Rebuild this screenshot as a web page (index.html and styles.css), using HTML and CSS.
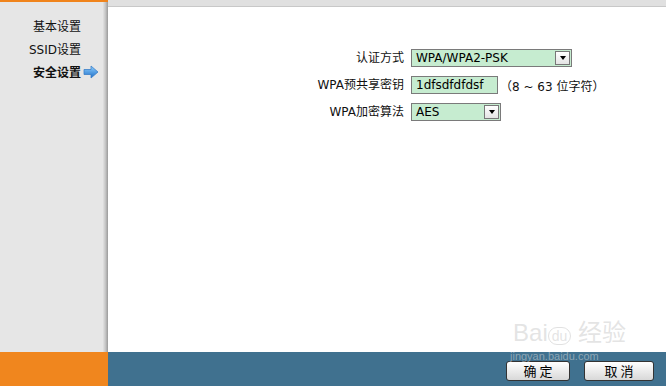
FILE: index.html
```html
<!DOCTYPE html>
<html>
<head>
<meta charset="utf-8">
<link rel="stylesheet" href="styles.css">
</head>
<body>
<div class="page">
  <div class="main">
    <div class="sidebar">
      <div class="nav-item">基本设置</div>
      <div class="nav-item">SSID设置</div>
      <div class="nav-item active">安全设置<svg class="arrow" width="16" height="14" viewBox="0 0 16 14"><defs><linearGradient id="g" x1="0" y1="0" x2="0" y2="1"><stop offset="0" stop-color="#8fd0ff"/><stop offset="1" stop-color="#1e6fc8"/></linearGradient></defs><path d="M1 4.5 H8 V1 L15 7 L8 13 V9.5 H1 Z" fill="url(#g)" stroke="#3a7fc8" stroke-width="0.8"/></svg></div>
    </div>
    <div class="edge"></div>
    <div class="content">
      <div class="form">
        <div class="label">认证方式</div>
        <div class="field"><div class="select wide"><span>WPA/WPA2-PSK</span><span class="drop"><i></i></span></div></div>
        <div class="label">WPA预共享密钥</div>
        <div class="field"><div class="input">1dfsdfdfdsf</div><span class="hint">（8 ~ 63 位字符）</span></div>
        <div class="label">WPA加密算法</div>
        <div class="field"><div class="select narrow"><span>AES</span><span class="drop"><i></i></span></div></div>
      </div>
      <div class="watermark">
        <div class="wm-logo">Bai<span class="paw">du</span> 经验</div>
      </div>
    </div>
  </div>
  <div class="footer">
    <div class="foot-left"></div>
    <div class="foot-right">
      <span class="wm-url">jingyan.baidu.com</span>
      <button class="btn">确 定</button>
      <button class="btn">取 消</button>
    </div>
  </div>
</div>
</body>
</html>
```
FILE: styles.css
```css
html, body {
  margin: 0;
  padding: 0;
}
body {
  font-family: "DejaVu Sans", "Noto Sans CJK SC", sans-serif;
  font-size: 12px;
  color: #000;
  background: #fff;
}
.page {
  width: 666px;
  height: 386px;
  display: flex;
  flex-direction: column;
  overflow: hidden;
}
.main {
  flex: 1;
  display: flex;
}
.sidebar {
  width: 103px;
  background: #e6e6e6;
  border-top: 2px solid #f0841c;
  padding-top: 17px;
  display: flex;
  flex-direction: column;
  gap: 7px;
}
.edge {
  width: 5px;
  background: linear-gradient(to right, #e2e2e2, #c4c4c4 50%, #9a9a9a);
  border-top: 2px solid #f0841c;
}
.nav-item {
  position: relative;
  text-align: right;
  padding-right: 22px;
  line-height: 16px;
  color: #111;
}
.nav-item.active {
  font-weight: bold;
}
.arrow {
  position: absolute;
  right: 4px;
  top: 0;
}
.content {
  flex: 1;
  position: relative;
  border-top: 6px solid #e0e0e0;
  box-shadow: inset 0 1px 0 #c8c8c8;
  padding-top: 43px;
}
.form {
  display: grid;
  grid-template-columns: 296px auto;
  column-gap: 7px;
  row-gap: 9px;
  align-items: center;
}
.label {
  text-align: right;
  line-height: 18px;
  color: #111;
}
.field {
  display: flex;
  align-items: center;
  gap: 2px;
}
.select, .input {
  height: 16px;
  border: 1px solid #7a7a7a;
  background: #c6ecd0;
  line-height: 16px;
  padding-left: 4px;
  box-sizing: content-box;
}
.select {
  display: flex;
  justify-content: space-between;
  align-items: center;
  padding-right: 1px;
}
.select.wide { width: 154px; }
.select.narrow { width: 83px; }
.input { width: 81px; }
.drop {
  width: 15px;
  height: 14px;
  background: linear-gradient(#ffffff, #e4e4e4);
  border: 1px solid #777;
  box-sizing: border-box;
  display: flex;
  align-items: center;
  justify-content: center;
}
.drop i {
  width: 0;
  height: 0;
  border-left: 3px solid transparent;
  border-right: 3px solid transparent;
  border-top: 4px solid #000;
}
.hint {
  color: #111;
}
.watermark {
  position: absolute;
  right: 40px;
  bottom: 4px;
  color: rgba(205, 205, 205, 0.55);
  font-family: "Liberation Sans", "Noto Sans CJK SC", sans-serif;
  font-size: 24px;
}
.paw {
  font-size: 14px;
  border: 1px solid rgba(205,205,205,0.6);
  border-radius: 10px;
  padding: 0 3px;
}
.footer {
  height: 34px;
  display: flex;
}
.foot-left {
  width: 108px;
  background: #f0861e;
}
.foot-right {
  flex: 1;
  position: relative;
  background: #40718f;
  display: flex;
  justify-content: flex-end;
  align-items: center;
  gap: 14px;
  padding-right: 12px;
  padding-top: 4px;
}
.wm-url {
  position: absolute;
  left: 402px;
  top: 0;
  line-height: 9px;
  color: rgba(220, 220, 220, 0.5);
  font-size: 11px;
  font-family: "Liberation Sans", sans-serif;
}
.btn {
  width: 64px;
  height: 20px;
  border: 1px solid #333;
  border-radius: 3px;
  background: linear-gradient(#ffffff, #d8d8d8);
  font-family: "Noto Sans CJK SC", sans-serif;
  font-size: 13px;
  line-height: 16px;
  padding: 0;
  color: #000;
}
.btn:last-child { width: 70px; }
```
